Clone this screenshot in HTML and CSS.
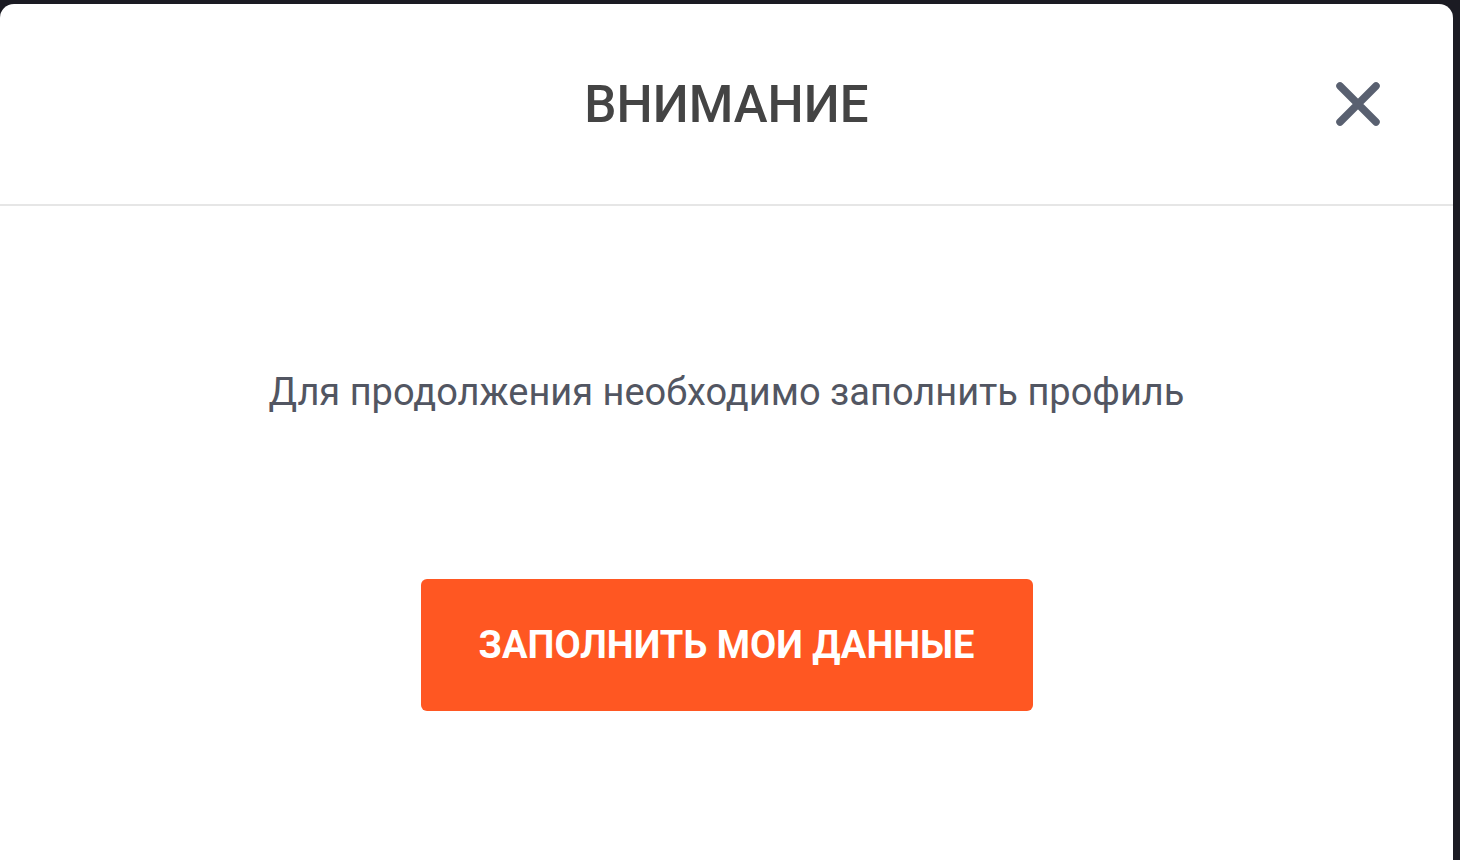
FILE: index.html
```html
<!DOCTYPE html>
<html lang="ru">
  <head>
    <meta charset="UTF-8" />
    <meta name="viewport" content="width=device-width, initial-scale=1.0" />
    <title>Внимание</title>
    <link rel="stylesheet" href="styles.css">
  </head>

  <body>
    <div class="modal">
      <div class="modal-header">
        <span></span>
        <h2 class="modal-title">ВНИМАНИЕ</h2>
        <button class="modal-close" aria-label="Закрыть">
          <svg width="46" height="46" viewBox="0 0 46 46">
            <path d="M5 5 L41 41 M41 5 L5 41" stroke="#596070" stroke-width="7.5" stroke-linecap="round" fill="none" />
          </svg>
        </button>
      </div>
      <div class="modal-body">
        <p class="modal-text">Для продолжения необходимо заполнить профиль</p>
        <button class="fill-button">ЗАПОЛНИТЬ МОИ ДАННЫЕ</button>
      </div>
    </div>
  </body>
</html>
```

FILE: styles.css
```css
body {
  margin: 0;
  background: #1b1b23;
  font-family: Roboto, "Liberation Sans", sans-serif;
  overflow: hidden;
}

.modal {
  background: #fff;
  margin: 4px 7px 0 0;
  height: 856px;
  border-radius: 14px 14px 0 0;
}

.modal-header {
  display: grid;
  grid-template-columns: 1fr auto 1fr;
  align-items: center;
  height: 200px;
  border-bottom: 2px solid #e6e6e6;
}

.modal-title {
  margin: 0;
  font-size: 51px;
  font-weight: 500;
  color: #444;
}

.modal-close {
  justify-self: end;
  margin-right: 72px;
  padding: 0;
  border: none;
  background: none;
  display: flex;
  cursor: pointer;
}

.modal-body {
  display: flex;
  flex-direction: column;
  align-items: center;
  padding-top: 164px;
}

.modal-text {
  margin: 0;
  font-size: 38px;
  line-height: 44px;
  color: #525662;
}

.fill-button {
  margin-top: 165px;
  width: 612px;
  height: 132px;
  border: none;
  border-radius: 6px;
  background: #ff5722;
  color: #fff;
  font-family: Roboto, "Liberation Sans", sans-serif;
  font-size: 38px;
  font-weight: 700;
  cursor: pointer;
}
```
